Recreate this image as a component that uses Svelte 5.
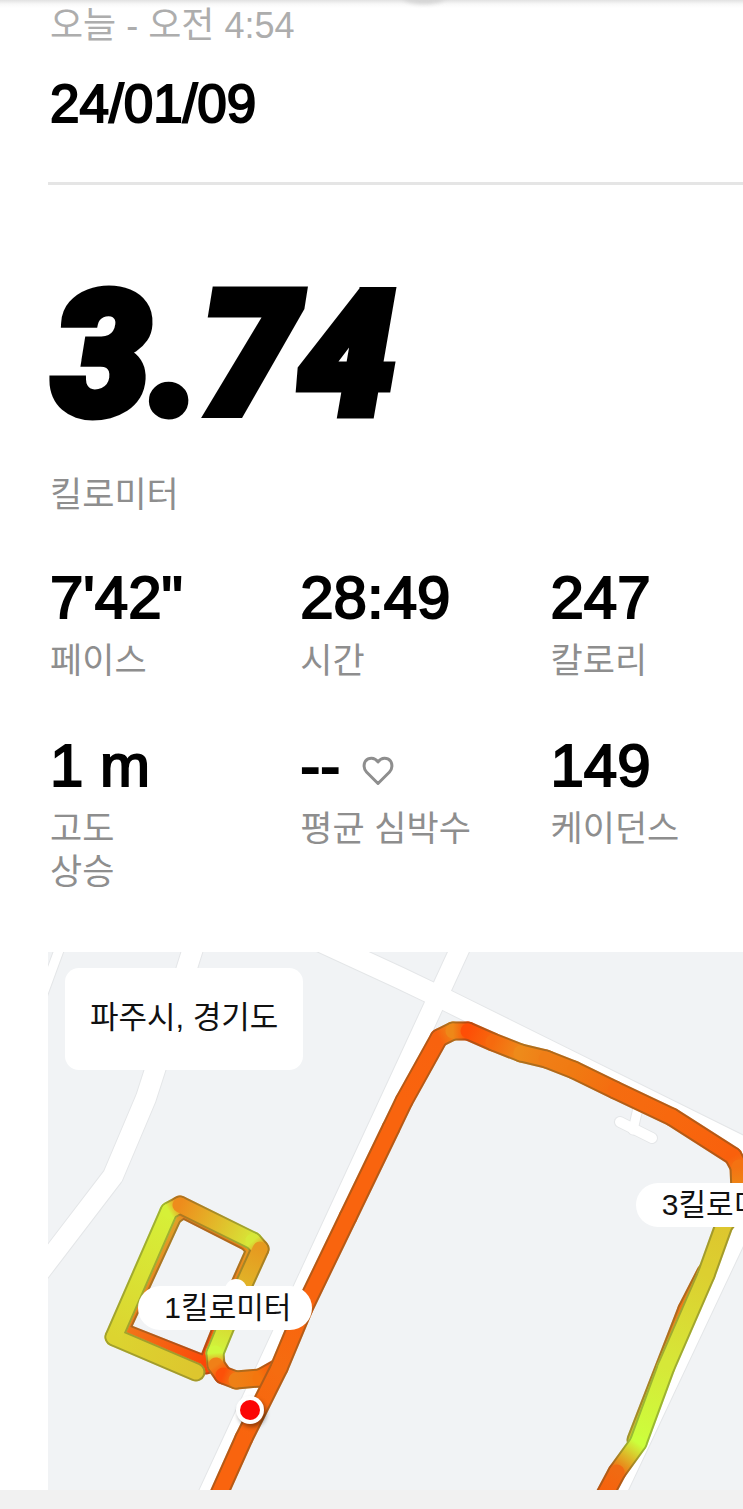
<script lang="ts">
    type Point = { x: number; y: number; c: string };

    const stats = [
        { value: "7'42\"", label: ["페이스"] },
        { value: "28:49", label: ["시간"] },
        { value: "247", label: ["칼로리"] },
        { value: "1 m", label: ["고도", "상승"] },
        { value: "--", label: ["평균 심박수"], heart: true },
        { value: "149", label: ["케이던스"] },
    ];

    const roads = [
        { d: "M14 -10 L-8 50", w: 9 },
        { d: "M147 -10 L107 118 L98 146 L65 224 L0 309 L-20 335", w: 20 },
        { d: "M274 -10 L352 26 L400 49 L715 205", w: 21 },
        { d: "M415 -10 L363 103 L155 553", w: 19 },
        { d: "M760 130 L684 294 L562 553", w: 20 },
        { d: "M590 156 L585 178", w: 9 },
        { d: "M572 170 L604 186", w: 10 },
    ];

    const p = (x: number, y: number, c: string): Point => ({ x, y, c });

    // pace colours: red is slow, lime is fast
    const passes: Point[][] = [
        [p(658, 320, "#ee8414"), p(639, 357, "#f07818"), p(588, 488, "#d8c030")],
        [
            p(702, 240, "#e8a018"), p(676, 273, "#ddc62e"), p(658, 323, "#dccf30"),
            p(618, 415, "#d6e838"), p(590, 491, "#ccff3c"), p(569, 520, "#f06a12"), p(553, 550, "#fa5e0a"),
        ],
        [
            p(158, 413, "#fc4808"), p(72, 379, "#f0781a"), p(125, 264, "#e0a028"), p(135, 257, "#ee7c1c"),
            p(200, 290, "#ee7c18"), p(207, 298, "#e69a20"), p(184, 350, "#f27018"), p(160, 410, "#fc4808"),
        ],
        [
            p(148, 420, "#ddc62e"), p(66, 385, "#dcd430"), p(121, 259, "#d6f038"),
            p(132, 253, "#ee8c1c"), p(205, 289, "#d6e838"), p(212, 297, "#e69a20"), p(188, 350, "#dec02c"),
            p(167, 401, "#d0f83c"), p(168, 413, "#f08018"), p(175, 423, "#fc5008"), p(188, 428, "#ee8016"),
            p(212, 426, "#f4760e"), p(228, 417, "#fa560a"),
        ],
        [
            p(166, 553, "#f9640e"), p(196, 486, "#f9640e"), p(231, 416, "#f56c10"), p(256, 356, "#f9640e"),
            p(300, 265, "#f9640e"), p(343, 176, "#f9640e"), p(356, 149, "#f9640e"), p(391, 86, "#f8620e"),
            p(405, 79, "#ee8818"), p(420, 79, "#fe4e06"), p(445, 90, "#f66a0e"), p(473, 101, "#ee8a1a"),
            p(498, 107, "#f07e16"), p(526, 118, "#f07a12"), p(567, 138, "#f56c10"), p(624, 165, "#f7680e"),
            p(685, 204, "#f9600c"), p(691, 215, "#f47212"), p(692, 240, "#ec8c16"),
        ],
    ];

    const layers = passes.map((points, i) => ({
        line: points.map(({ x, y }) => `${x},${y}`).join(" "),
        segments: points.slice(1).map((to, j) => ({ id: `pace-${i}-${j}`, from: points[j], to })),
    }));
</script>

<main>
    <div class="pull-edge"></div>

    <section class="content">
        <header>
            <p class="time">오늘 - 오전 4:54</p>
            <h1>24/01/09</h1>
        </header>

        <div class="distance">
            <strong>3.74</strong>
            <p class="label">킬로미터</p>
        </div>

        <dl>
            {#each stats as stat}
                <div class="stat">
                    <dt class="label">
                        {#each stat.label as line}<span>{line}</span>{/each}
                    </dt>
                    <dd>
                        {stat.value}
                        {#if stat.heart}
                            <svg class="heart" viewBox="0 0 32 30" aria-hidden="true">
                                <path d="M16 27.500 L4.500 16 C1.500 13 1.500 8 3.500 5 C6.500 1.500 12.500 1 16 6 C19.500 1 25.500 1.500 28.500 5 C30.500 8 30.500 13 27.500 16 Z" />
                            </svg>
                        {/if}
                    </dd>
                </div>
            {/each}
        </dl>

        <div class="map">
            <svg class="canvas" viewBox="0 0 695 538" aria-hidden="true">
                <defs>
                    {#each layers as layer}
                        {#each layer.segments as { id, from, to }}
                            <linearGradient {id} gradientUnits="userSpaceOnUse" x1={from.x} y1={from.y} x2={to.x} y2={to.y}>
                                <stop offset="0" stop-color={from.c} />
                                <stop offset="1" stop-color={to.c} />
                            </linearGradient>
                        {/each}
                    {/each}
                </defs>

                {#each roads as road}
                    <path class="road-edge" d={road.d} stroke-width={road.w + 2} />
                {/each}
                {#each roads as road}
                    <path class="road" d={road.d} stroke-width={road.w} />
                {/each}

                {#each layers as layer}
                    <g class="route">
                        {#each layer.segments as { id, from, to }}
                            <path d="M{from.x} {from.y} L{to.x} {to.y}" stroke="url(#{id})" stroke-width="19" />
                        {/each}
                        <polyline points={layer.line} stroke="#3c4828" stroke-opacity="0.36" stroke-width="19" />
                        {#each layer.segments as { id, from, to }}
                            <path d="M{from.x} {from.y} L{to.x} {to.y}" stroke="url(#{id})" stroke-width="15" />
                        {/each}
                    </g>
                {/each}

                <circle cx="188" cy="338" r="11" fill="#fff" />
                <circle class="marker" cx="202" cy="458" r="14" fill="#fff" />
                <circle cx="202" cy="458" r="10" fill="#fb0505" />
            </svg>

            <span class="place">파주시, 경기도</span>
            <span class="pin first">1킬로미터</span>
            <span class="pin third">3킬로미터</span>
        </div>
    </section>
    <footer></footer>
</main>

<style>
    :global(body) {
        background: #f1f1f1;
    }

    main {
        position: relative;
        overflow: hidden;
        background: #fff;
        color: #000;
        font-family: "Liberation Sans", "Noto Sans CJK KR", sans-serif;
    }

    .pull-edge {
        position: absolute;
        top: 0;
        left: 0;
        right: 0;
        height: 8px;
        background: linear-gradient(#e2e2e2, #f8f8f8 50%, #fff);
    }

    .pull-edge::after {
        content: "";
        position: absolute;
        left: 57%;
        top: -12px;
        width: 44px;
        height: 16px;
        margin-left: -22px;
        border-radius: 50%;
        background: #d4d4d4;
        filter: blur(2px);
    }

    .content {
        padding-left: 48px;
    }

    p, h1, dl, dd {
        margin: 0;
    }

    header {
        position: relative;
        padding: 0 0 48px 2px;
        border-bottom: 3px solid #e5e5e5;
    }

    .time {
        padding-top: 4px;
        font-size: 36px;
        line-height: 44px;
        color: #adadad;
    }

    h1 {
        margin-top: 26px;
        font-size: 53px;
        line-height: 60px;
        font-weight: 400;
        -webkit-text-stroke: 2px #000;
    }

    .distance {
        padding-left: 2px;
    }

    .distance strong {
        display: block;
        margin-top: 70px;
        padding-left: 3px;
        font-family: Roboto, "Liberation Sans", sans-serif;
        font-size: 173px;
        line-height: 200px;
        font-weight: 900;
        font-style: italic;
        -webkit-text-stroke: 9px #000;
    }

    .distance .label {
        margin-top: 18px;
    }

    .label {
        font-size: 35px;
        line-height: 43px;
        color: #8e8e8e;
    }

    .label span {
        display: block;
    }

    dl {
        display: grid;
        grid-template-columns: 13fr 13fr 10fr;
        row-gap: 48px;
        margin-top: 46px;
        padding-left: 2px;
    }

    .stat {
        display: flex;
        flex-direction: column-reverse;
        justify-content: flex-end;
    }

    dd {
        display: flex;
        align-items: center;
        gap: 22px;
        font-size: 60px;
        line-height: 72px;
        margin-bottom: 5px;
        -webkit-text-stroke: 2px #000;
    }

    .heart {
        width: 32px;
        height: 30px;
        margin-top: 10px;
        fill: none;
        stroke: #8e8e8e;
        stroke-width: 3;
        stroke-linejoin: round;
    }

    .map {
        position: relative;
        overflow: hidden;
        margin-top: 59px;
        background: #f1f3f5;
    }

    .canvas {
        display: block;
        width: 100%;
        height: auto;
        fill: none;
        stroke-linejoin: round;
    }

    .road-edge {
        stroke: #e4e6e8;
        stroke-linecap: round;
    }

    .road {
        stroke: #fff;
        stroke-linecap: round;
    }

    .route {
        stroke-linecap: round;
    }

    .marker {
        filter: drop-shadow(2px 3px 2px rgba(0, 0, 0, 0.4));
    }

    .place,
    .pin {
        position: absolute;
        background: #fff;
        color: #111;
        white-space: nowrap;
    }

    .place {
        top: 16px;
        left: 17px;
        padding: 28px 25px 30px;
        border-radius: 14px;
        font-size: 31px;
        line-height: 44px;
    }

    .pin {
        padding: 0 21px 0 26px;
        border-radius: 22px;
        font-size: 30px;
        line-height: 44px;
    }

    .first {
        left: 13%;
        top: 62%;
    }

    .third {
        left: 85%;
        top: 43%;
        margin-left: -3px;
    }

    footer {
        height: 19px;
        background: #f1f1f1;
    }
</style>
